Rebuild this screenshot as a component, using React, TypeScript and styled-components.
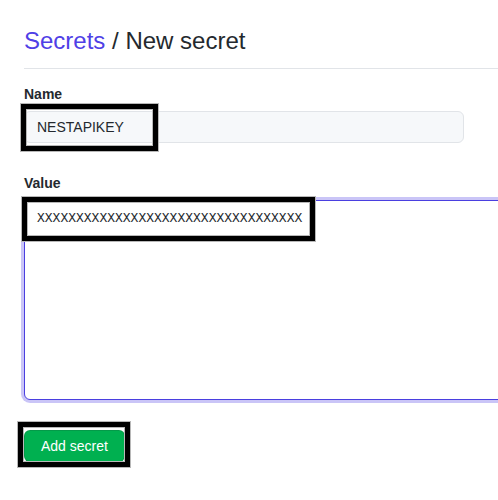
import React, { useEffect, useRef } from "react";
import styled, { createGlobalStyle } from "styled-components";

const Global = createGlobalStyle`
  html { overflow: hidden; }
  html, body { margin: 0; padding: 0; background: #fff; }
  body { font-family: "Liberation Sans", Arial, sans-serif; color: #24292e; }
`;

const Page = styled.div`
  position: relative;
  width: 100%;
  height: 500px;
  overflow: hidden;
  padding: 26px 0 0 24px;
  box-sizing: border-box;
`;

const Header = styled.h1`
  margin: 0;
  width: 600px;
  padding-bottom: 12px;
  font-size: 24px;
  line-height: 30px;
  font-weight: 400;
  color: #24292e;
  border-bottom: 1px solid #e1e4e8;
`;

const Crumb = styled.a`
  color: #4f3fe6;
  text-decoration: none;
`;

const Form = styled.form`
  display: flex;
  flex-direction: column;
  padding-top: 16px;
`;

const Field = styled.div<{ $space: number }>`
  display: flex;
  flex-direction: column;
  gap: 8px;
  margin-bottom: ${(p) => p.$space}px;
`;

const Label = styled.label`
  font-size: 14px;
  font-weight: 700;
  line-height: 18px;
  color: #24292e;
`;

const NameInput = styled.input`
  width: 440px;
  height: 32px;
  box-sizing: border-box;
  padding: 5px 12px;
  font-family: "Liberation Sans", Arial, sans-serif;
  font-size: 14px;
  color: #24292e;
  background: #f6f8fa;
  border: 1px solid #e1e4e8;
  border-radius: 6px;
  outline: none;
`;

const ValueArea = styled.textarea`
  width: 600px;
  height: 200px;
  box-sizing: border-box;
  padding: 8px 12px;
  font-family: "Liberation Mono", "Courier New", monospace;
  font-size: 13px;
  line-height: 20px;
  color: #24292e;
  caret-color: #24292e;
  background: #fff;
  border: 1px solid #4a3fe0;
  border-radius: 6px;
  box-shadow: 0 0 0 3px rgba(79, 63, 230, 0.3);
  outline: none;
  resize: none;
`;

const Submit = styled.button`
  align-self: flex-start;
  height: 32px;
  padding: 0 16px;
  font-family: "Liberation Sans", Arial, sans-serif;
  font-size: 14px;
  color: #fff;
  background: #00b050;
  border: 1px solid rgba(27, 31, 35, 0.15);
  border-radius: 6px;
`;

const Highlight = styled.div<{ $x: number; $y: number; $w: number; $h: number }>`
  position: absolute;
  left: ${(p) => p.$x}px;
  top: ${(p) => p.$y}px;
  width: ${(p) => p.$w}px;
  height: ${(p) => p.$h}px;
  box-sizing: border-box;
  border: 5px solid #000;
  box-shadow: 0 0 0 1px #b8b8b8, inset 0 0 0 1px #b8b8b8;
  pointer-events: none;
`;

const SECRET = "XXXXXXXXXXXXXXXXXXXXXXXXXXXXXXXXXX";

export default function App() {
  const areaRef = useRef<HTMLTextAreaElement>(null);
  useEffect(() => {
    const el = areaRef.current;
    if (el) {
      el.focus();
      el.setSelectionRange(SECRET.length, SECRET.length);
    }
  }, []);
  return (
    <>
      <Global />
      <Page>
        <Header>
          <Crumb href="#">Secrets</Crumb> / New secret
        </Header>
        <Form onSubmit={(e) => e.preventDefault()}>
          <Field $space={31}>
            <Label>Name</Label>
            <NameInput defaultValue="NESTAPIKEY" />
          </Field>
          <Field $space={30}>
            <Label>Value</Label>
            <ValueArea ref={areaRef} defaultValue={SECRET} />
          </Field>
          <Submit type="submit">Add secret</Submit>
        </Form>
        <Highlight $x={21} $y={104} $w={137} $h={47} />
        <Highlight $x={22} $y={197} $w={293} $h={44} />
        <Highlight $x={18} $y={422} $w={112} $h={45} />
      </Page>
    </>
  );
}
